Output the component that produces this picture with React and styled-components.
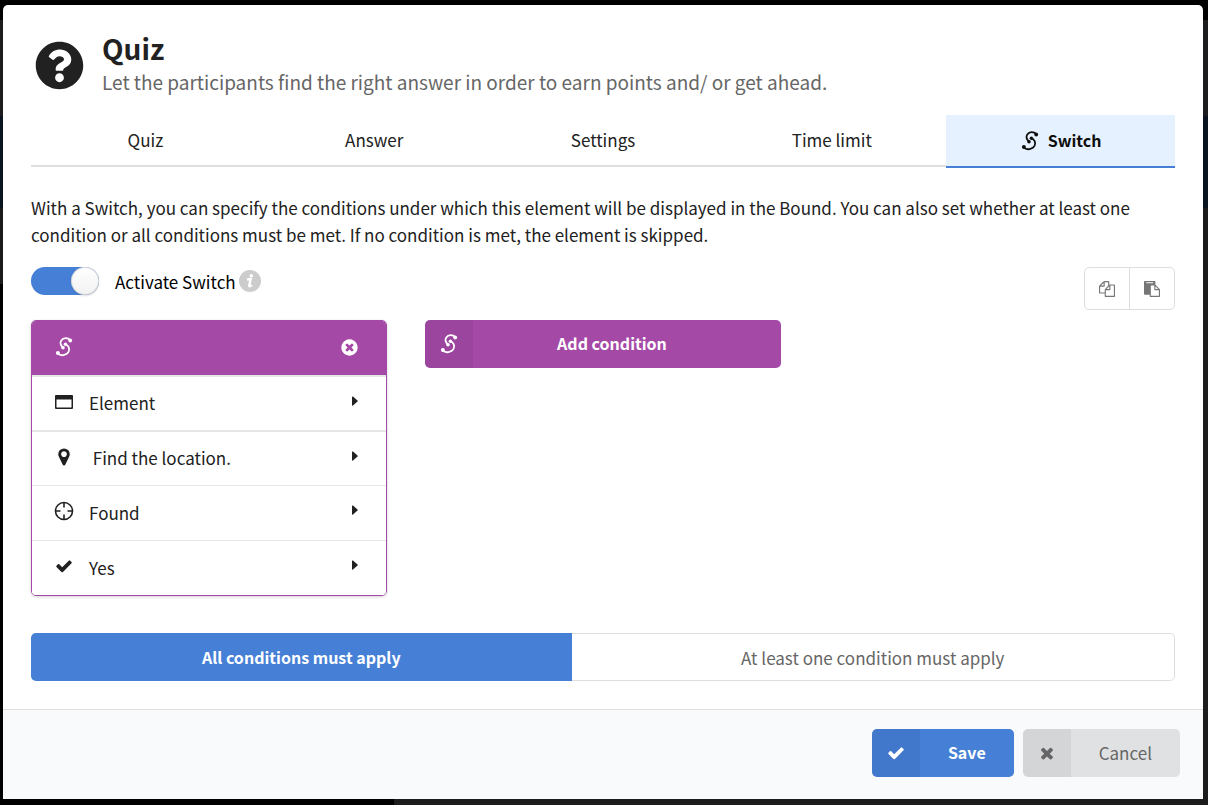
import React, { useState } from "react";
import styled, { createGlobalStyle, css } from "styled-components";
import { FaQuestionCircle } from "react-icons/fa";

const c = {
  blue: "#457fd6",
  purple: "#a549a7",
  ink: "#212121",
  muted: "#666666",
  line: "#dededf",
};

const GlobalStyle = createGlobalStyle`
  *, *::before, *::after { box-sizing: border-box; }
  body {
    margin: 0;
    background: linear-gradient(#000 20px, #1b1c1d 20px, #1b1c1d 116px, #0a1420 116px, #0a1420 208px, #1b1b1b 208px, #1b1b1b 284px, #000 284px);
    color: ${c.ink};
    font-family: "Noto Sans CJK SC", "Noto Sans", sans-serif;
    font-size: 17px;
    line-height: 27px;
  }
  button { font: inherit; color: inherit; cursor: pointer; }
  svg { display: block; fill: currentColor; flex: none; }
`;

const Page = styled.div`
  min-height: 100vh;
  padding: 5px 5px 6px 3px;
  display: flex;
  background:
    linear-gradient(#1c1c1c, #1c1c1c) right bottom / calc(100% - 394px) 6px no-repeat,
    linear-gradient(#1c1c1c, #1c1c1c) right bottom / 5px calc(100% - 284px) no-repeat;
`;

const Modal = styled.main`
  flex: 1;
  display: flex;
  flex-direction: column;
  background: #fff;
  border-radius: 5px 5px 0 0;
  overflow: hidden;
`;

const Content = styled.div`
  flex: 1;
  padding: 28px;
`;

const Header = styled.header`
  display: flex;
  align-items: center;
  gap: 18px;
  padding: 0 4px;
  height: 64px;
  margin-bottom: 18px;
`;

const Title = styled.h1`
  margin: 0 0 4px;
  font-size: 28px;
  line-height: 30px;
  font-weight: 700;
`;

const Subtitle = styled.p`
  margin: 0;
  font-size: 19px;
  line-height: 30px;
  color: ${c.muted};
`;

const Tabs = styled.div`
  display: flex;
  align-items: flex-start;
  margin-bottom: 26px;
`;

const Tab = styled.button`
  flex: 1 1 0;
  display: flex;
  align-items: center;
  justify-content: center;
  gap: 8px;
  height: 52px;
  padding: 0 0 2px;
  border: 0;
  border-bottom: 2px solid ${c.line};
  background: transparent;
  ${(p) => p.$active && css`
    height: 53px;
    padding: 0;
    background: #e5f1ff;
    border-color: ${c.blue};
    color: #0d0d0d;
    font-size: 16px;
    font-weight: 700;
  `}
`;

const Description = styled.p`
  margin: 0 0 19px;
`;

const Toolbar = styled.div`
  display: flex;
  justify-content: space-between;
  align-items: flex-start;
  margin-bottom: 10px;
`;

const ToggleLabel = styled.label`
  display: flex;
  align-items: center;
  gap: 3px;
  height: 28px;
  color: #000;
  cursor: pointer;
`;

const ToggleInput = styled.input`
  appearance: none;
  display: flex;
  justify-content: flex-end;
  width: 68px;
  height: 28px;
  margin: 0 13px 0 0;
  border-radius: 14px;
  background: ${c.blue};
  &::before {
    content: "";
    width: 28px;
    height: 28px;
    border-radius: 50%;
    background: linear-gradient(#fff, #f2f2f2);
    box-shadow: 0 1px 2px rgba(34, 36, 38, 0.15), inset 0 0 0 1px rgba(34, 36, 38, 0.15);
  }
  &:not(:checked) { justify-content: flex-start; background: #ddd; }
`;

const IconGroup = styled.div`
  display: flex;
  border: 1px solid ${c.line};
  border-radius: 5px;
`;

const IconButton = styled.button`
  width: 44px;
  height: 41px;
  display: grid;
  place-items: center;
  padding: 0;
  border: 0;
  background: transparent;
  color: #767676;
  & + & { width: 45px; border-left: 1px solid ${c.line}; }
`;

const Conditions = styled.div`
  display: flex;
  align-items: flex-start;
  gap: 38px;
  margin-bottom: 37px;
`;

const Card = styled.section`
  width: 356px;
  border: 1px solid ${c.purple};
  border-radius: 5px;
  overflow: hidden;
  box-shadow: 0 1px 3px rgba(34, 36, 38, 0.2);
`;

const CardHeader = styled.div`
  display: flex;
  align-items: center;
  justify-content: space-between;
  height: 54px;
  padding: 0 27px 2px 22px;
  background: ${c.purple};
  color: #fff;
`;

const CloseButton = styled.button`
  padding: 0;
  border: 0;
  background: transparent;
  color: #fff;
`;

const Row = styled.button`
  display: flex;
  align-items: center;
  width: 100%;
  height: 55px;
  padding: 0 28px 2px 22px;
  border: 0;
  border-top: ${(p) => (p.$thick ? 2 : 1)}px solid #e6e6e6;
  background: #fff;
  text-align: left;
`;

const RowIcon = styled.span`
  display: grid;
  place-items: center;
  width: 20px;
  height: 22px;
  margin-right: 15px;
  padding-bottom: 2px;
`;

const RowText = styled.span`
  flex: 1;
  white-space: pre;
`;

const RowCaret = styled.span`
  padding-bottom: 4px;
`;

const Button = styled.button`
  display: flex;
  height: 48px;
  padding: 0;
  border: 0;
  border-radius: 5px;
  overflow: hidden;
  background: ${(p) => p.$bg};
  color: ${(p) => p.$fg || "#fff"};
  font-size: ${(p) => (p.$fg ? 17 : 16)}px;
  font-weight: ${(p) => (p.$fg ? 400 : 700)};
  width: ${(p) => (p.$wide ? "356px" : "auto")};
`;

const ButtonIcon = styled.span`
  display: grid;
  place-items: center;
  width: 48px;
  height: 48px;
  background: rgba(0, 0, 0, 0.05);
`;

const ButtonText = styled.span`
  flex: 1;
  align-self: center;
  padding: ${(p) => (p.$wide ? "0 30px 2px 0" : "0 28px 2px")};
`;

const Choices = styled.div`
  display: flex;
`;

const Choice = styled.button`
  flex: ${(p) => (p.$active ? "541 1 0" : "603 1 0")};
  height: 48px;
  padding: 0;
  border: 1px solid ${c.line};
  border-left: 0;
  border-radius: 0 5px 5px 0;
  background: #fff;
  color: ${c.muted};
  ${(p) => p.$active && css`
    border: 0;
    border-radius: 5px 0 0 5px;
    background: ${c.blue};
    color: #fff;
    font-size: 16px;
    font-weight: 700;
  `}
`;

const Footer = styled.footer`
  display: flex;
  justify-content: flex-end;
  gap: 9px;
  padding: 19px 23px 22px;
  border-top: 1px solid ${c.line};
  background: #f9fafc;
`;

const paths = {
  check: "M1671 566q0 40-28 68l-724 724-136 136q-28 28-68 28t-68-28l-136-136-362-362q-28-28-28-68t28-68l136-136q28-28 68-28t68 28l294 295 656-657q28-28 68-28t68 28l136 136q28 28 28 68z",
  times: "M1490 1322q0 40-28 68l-136 136q-28 28-68 28t-68-28l-294-294-294 294q-28 28-68 28t-68-28l-136-136q-28-28-28-68t28-68l294-294-294-294q-28-28-28-68t28-68l136-136q28-28 68-28t68 28l294 294 294-294q28-28 68-28t68 28l136 136q28 28 28 68t-28 68l-294 294 294 294q28 28 28 68z",
  close: "M1277 1122q0-26-19-45l-181-181 181-181q19-19 19-45 0-27-19-46l-90-90q-19-19-46-19-26 0-45 19l-181 181-181-181q-19-19-45-19-27 0-46 19l-90 90q-19 19-19 46 0 26 19 45l181 181-181 181q-19 19-19 45 0 27 19 46l90 90q19 19 46 19 26 0 45-19l181-181 181 181q19 19 45 19 27 0 46-19l90-90q19-19 19-46zm387-226q0 209-103 385.500t-279.500 279.500-385.500 103-385.500-103-279.500-279.500-103-385.500 103-385.500 279.500-279.500 385.500-103 385.500 103 279.500 279.500 103 385.500z",
  copy: "M1696 384q40 0 68 28t28 68v1216q0 40-28 68t-68 28h-960q-40 0-68-28t-28-68v-288h-544q-40 0-68-28t-28-68v-672q0-40 20-88t48-76l408-408q28-28 76-48t88-20h416q40 0 68 28t28 68v328q68-40 128-40h416zm-544 213l-299 299h299v-299zm-640-384l-299 299h299v-299zm196 647l316-316v-416h-384v416q0 40-28 68t-68 28h-416v640h512v-256q0-40 20-88t48-76zm956 804v-1152h-384v416q0 40-28 68t-68 28h-416v640h896z",
  paste: "M768 1664h896v-640h-416q-40 0-68-28t-28-68v-416h-384v1152zm256-1440v-64q0-13-9.500-22.500t-22.500-9.500h-704q-13 0-22.500 9.500t-9.500 22.500v64q0 13 9.500 22.500t22.500 9.500h704q13 0 22.500-9.500t9.500-22.500zm256 672h299l-299-299v299zm512 128v672q0 40-28 68t-68 28h-960q-40 0-68-28t-28-68v-160h-544q-40 0-68-28t-28-68v-1344q0-40 28-68t68-28h1088q40 0 68 28t28 68v328q21 13 36 28l408 408q28 28 48 76t20 88z",
  marker: "M1152 640q0-106-75-181t-181-75-181 75-75 181 75 181 181 75 181-75 75-181zm256 0q0 109-33 179l-364 774q-16 33-47.500 52t-67.500 19-67.500-19-46.500-52l-365-774q-33-70-33-179 0-212 150-362t362-150 362 150 150 362z",
};

function Icon({ name, size = 18 }) {
  return (
    <svg width={size} height={size} viewBox="0 0 1792 1792" aria-hidden="true">
      <path d={paths[name]} />
    </svg>
  );
}

function SwitchIcon() {
  return (
    <svg width="20" height="20" viewBox="0 0 20 20" aria-hidden="true">
      <g fill="none" stroke="currentColor" strokeWidth="1.8" strokeLinecap="round">
        <path d="M16.200 3C14 .6 9.300 .4 7.300 3.400C5.800 5.900 6.600 8.500 9 10.600" />
        <path d="M11.200 7.200C14.500 8.500 16 11.200 14.700 14.500C12.900 18.500 6.500 19.500 3.800 16.400" />
      </g>
      <circle cx="16.200" cy="3.500" r="1.900" />
      <circle cx="11.400" cy="7.300" r="1.700" />
      <circle cx="9" cy="10.800" r="1.800" />
      <circle cx="3.900" cy="16" r="2" />
    </svg>
  );
}

function InfoIcon() {
  return (
    <svg width="22" height="22" viewBox="0 0 22 22" aria-hidden="true">
      <circle cx="11" cy="11" r="11" fill="#cccccc" />
      <circle cx="12.300" cy="5.700" r="1.800" fill="#fff" />
      <path d="M8 9.600C9.500 9.300 10.500 9 11.700 9L10.200 15.400C10 16.700 11.200 16.600 12.800 15.200" fill="none" stroke="#fff" strokeWidth="2.400" />
    </svg>
  );
}

function WindowIcon() {
  return (
    <svg width="18" height="14" viewBox="0 0 18 14" aria-hidden="true">
      <path fillRule="evenodd" d="M1 0h16q1 0 1 1v12q0 1-1 1H1q-1 0-1-1V1q0-1 1-1zM1.500 4.500v7.500q0 .5 .5 .5h14q.5 0 .5-.5V4.500z" />
    </svg>
  );
}

function TargetIcon() {
  return (
    <svg width="20" height="20" viewBox="0 0 20 20" aria-hidden="true">
      <g fill="none" stroke="currentColor" strokeWidth="1.600">
        <circle cx="10" cy="10" r="8.500" />
        <path d="M10 1.500V6.500M10 13.500V18.500M1.500 10H6.500M13.500 10H18.500" />
      </g>
    </svg>
  );
}

function Caret() {
  return (
    <svg width="6" height="10" viewBox="0 0 6 10" aria-hidden="true">
      <path d="M0 1Q0 0 1 .6L5.500 4.500Q6 5 5.500 5.500L1 9.400Q0 10 0 9z" />
    </svg>
  );
}

const tabs = ["Quiz", "Answer", "Settings", "Time limit", "Switch"];

const rows = [
  { text: "Element", icon: <WindowIcon />, thick: true },
  { text: " Find the location.", icon: <Icon name="marker" size={20} />, thick: true },
  { text: "Found", icon: <TargetIcon /> },
  { text: "Yes", icon: <Icon name="check" /> },
];

export default function App() {
  const [tab, setTab] = useState("Switch");
  const [all, setAll] = useState(true);
  return (
    <>
      <GlobalStyle />
      <Page>
        <Modal>
          <Content>
            <Header>
              <FaQuestionCircle size={49} />
              <div>
                <Title>Quiz</Title>
                <Subtitle>Let the participants find the right answer in order to earn points and/ or get ahead.</Subtitle>
              </div>
            </Header>
            <Tabs role="tablist">
              {tabs.map((name) => (
                <Tab key={name} role="tab" aria-selected={tab === name} $active={tab === name} onClick={() => setTab(name)}>
                  {name === "Switch" && <SwitchIcon />}
                  {name}
                </Tab>
              ))}
            </Tabs>
            <Description>
              With a Switch, you can specify the conditions under which this element will be displayed in the Bound. You can also set whether at least one condition or all conditions must be met. If no condition is met, the element is skipped.
            </Description>
            <Toolbar>
              <ToggleLabel>
                <ToggleInput type="checkbox" role="switch" defaultChecked />
                Activate Switch
                <InfoIcon />
              </ToggleLabel>
              <IconGroup>
                <IconButton aria-label="Copy conditions"><Icon name="copy" size={16} /></IconButton>
                <IconButton aria-label="Paste conditions"><Icon name="paste" size={16} /></IconButton>
              </IconGroup>
            </Toolbar>
            <Conditions>
              <Card>
                <CardHeader>
                  <SwitchIcon />
                  <CloseButton aria-label="Remove condition"><Icon name="close" size={19} /></CloseButton>
                </CardHeader>
                {rows.map((r) => (
                  <Row key={r.text} $thick={r.thick}>
                    <RowIcon>{r.icon}</RowIcon>
                    <RowText>{r.text}</RowText>
                    <RowCaret><Caret /></RowCaret>
                  </Row>
                ))}
              </Card>
              <Button $bg={c.purple} $wide>
                <ButtonIcon><SwitchIcon /></ButtonIcon>
                <ButtonText $wide>Add condition</ButtonText>
              </Button>
            </Conditions>
            <Choices>
              <Choice $active={all} aria-pressed={all} onClick={() => setAll(true)}>All conditions must apply</Choice>
              <Choice $active={!all} aria-pressed={!all} onClick={() => setAll(false)}>At least one condition must apply</Choice>
            </Choices>
          </Content>
          <Footer>
            <Button $bg={c.blue}>
              <ButtonIcon><Icon name="check" /></ButtonIcon>
              <ButtonText>Save</ButtonText>
            </Button>
            <Button $bg="#e0e1e2" $fg="#666666">
              <ButtonIcon><Icon name="times" /></ButtonIcon>
              <ButtonText>Cancel</ButtonText>
            </Button>
          </Footer>
        </Modal>
      </Page>
    </>
  );
}
